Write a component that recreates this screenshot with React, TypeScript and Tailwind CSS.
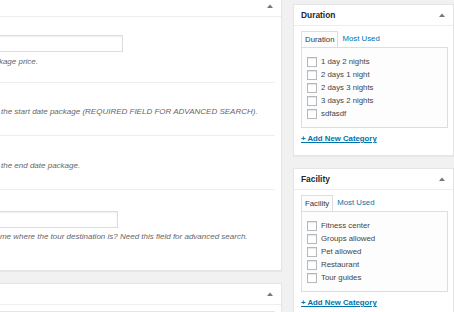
import React from 'react';

const font = { fontFamily: '"Liberation Sans", Arial, sans-serif' };

function Arrow() {
  return (
    <svg width="6" height="4" viewBox="0 0 6 4" className="block">
      <path d="M0 4 L3 0.5 L6 4 Z" fill="#72777c" />
    </svg>
  );
}

interface FieldRowProps {
  height: string;
  pad: string;
  input?: string;
  gap?: string;
  desc: string;
  shift: string;
  last?: boolean;
}

function FieldRow({ height, pad, input, gap, desc, shift, last }: FieldRowProps) {
  return (
    <div className={`${height} ${pad} mr-[6px] ${last ? '' : 'border-b border-[#eeeeee]'}`}>
      {input && (
        <div
          className={`${input} h-[17px] -ml-[10px] bg-white border border-[#dddddd] shadow-[inset_0_1px_2px_rgba(0,0,0,0.07)]`}
        />
      )}
      <p className={`${gap ?? ''} ${shift} text-[8px] leading-[10px] italic text-[#666666] whitespace-nowrap`}>
        {desc}
      </p>
    </div>
  );
}

function TermBox({ title, items }: { title: string; items: string[] }) {
  return (
    <div className="bg-white border border-[#e5e5e5] shadow-[0_1px_1px_rgba(0,0,0,0.04)]">
      {/* Header */}
      <div className="h-[21px] flex items-center justify-between pl-[7px] pr-[8px] border-b border-[#eeeeee]">
        <h2 className="text-[8.4px] font-bold text-[#23282d]">{title}</h2>
        <Arrow />
      </div>

      <div className="pl-[7px] pr-[5px] pt-[6px] pb-[11px]">
        {/* Tabs */}
        <div className="flex items-end h-[15px] relative z-10">
          <div className="h-[16px] px-[3px] pt-[1px] bg-[#fdfdfd] border border-b-0 border-[#dddddd] text-[7.8px] leading-[13px] text-[#32373c]">
            {title}
          </div>
          <div className="px-[4px] h-[15px] text-[7.8px] leading-[14px] text-[#0073aa]">Most Used</div>
        </div>

        {/* Checklist */}
        <div className="bg-[#fdfdfd] border border-[#dddddd] pt-[7px] pb-[7px] pl-[5px]">
          {items.map((item) => (
            <label key={item} className="flex items-center h-[13px] gap-[4px]">
              <span className="w-[10px] h-[10px] bg-white border border-[#b4b9be] shadow-[inset_0_1px_1px_rgba(0,0,0,0.1)]" />
              <span className="text-[7.8px] text-[#444444] leading-[10px]">{item}</span>
            </label>
          ))}
        </div>

        <a className="block mt-[6px] text-[7.8px] leading-[10px] font-bold text-[#0073aa] underline">
          + Add New Category
        </a>
      </div>
    </div>
  );
}

export default function App() {
  return (
    <div className="w-[454px] h-[312px] overflow-hidden bg-[#f1f1f1] flex gap-[11px]" style={font}>
      {/* Main column */}
      <div className="w-[282px] flex-none flex flex-col gap-[12px]">
        <div className="-mt-[5px] bg-white border border-l-0 border-[#e5e5e5] shadow-[0_1px_1px_rgba(0,0,0,0.04)]">
          <div className="h-[21px] flex items-center justify-end pr-[8px] border-b border-[#eeeeee]">
            <Arrow />
          </div>
          <FieldRow
            height="h-[66px]"
            pad="pt-[18px]"
            input="w-[133px]"
            gap="mt-[5px]"
            desc="package price."
            shift="-ml-[14px]"
          />
          <FieldRow
            height="h-[53px]"
            pad="pt-[24px]"
            desc="the start date package (REQUIRED FIELD FOR ADVANCED SEARCH)."
            shift="ml-[1px]"
          />
          <FieldRow height="h-[54px]" pad="pt-[25px]" desc="the end date package." shift="ml-[1px]" />
          <FieldRow
            height="h-[80px]"
            pad="pt-[21px]"
            input="w-[128px]"
            gap="mt-[4px]"
            desc="name where the tour destination is? Need this field for advanced search."
            shift="-ml-[9px]"
            last
          />
        </div>

        <div className="bg-white border border-l-0 border-[#e5e5e5] shadow-[0_1px_1px_rgba(0,0,0,0.04)] flex-1">
          <div className="h-[21px] flex items-center justify-end pr-[8px] border-b border-[#eeeeee]">
            <Arrow />
          </div>
          <div className="mt-[6px] mr-[6px] border-t border-[#e5e5e5]" />
        </div>
      </div>

      {/* Sidebar */}
      <div className="w-[161px] flex-none pt-[4px] flex flex-col gap-[12px]">
        <TermBox
          title="Duration"
          items={['1 day 2 nights', '2 days 1 night', '2 days 3 nights', '3 days 2 nights', 'sdfasdf']}
        />
        <TermBox
          title="Facility"
          items={['Fitness center', 'Groups allowed', 'Pet allowed', 'Restaurant', 'Tour guides']}
        />
      </div>
    </div>
  );
}
